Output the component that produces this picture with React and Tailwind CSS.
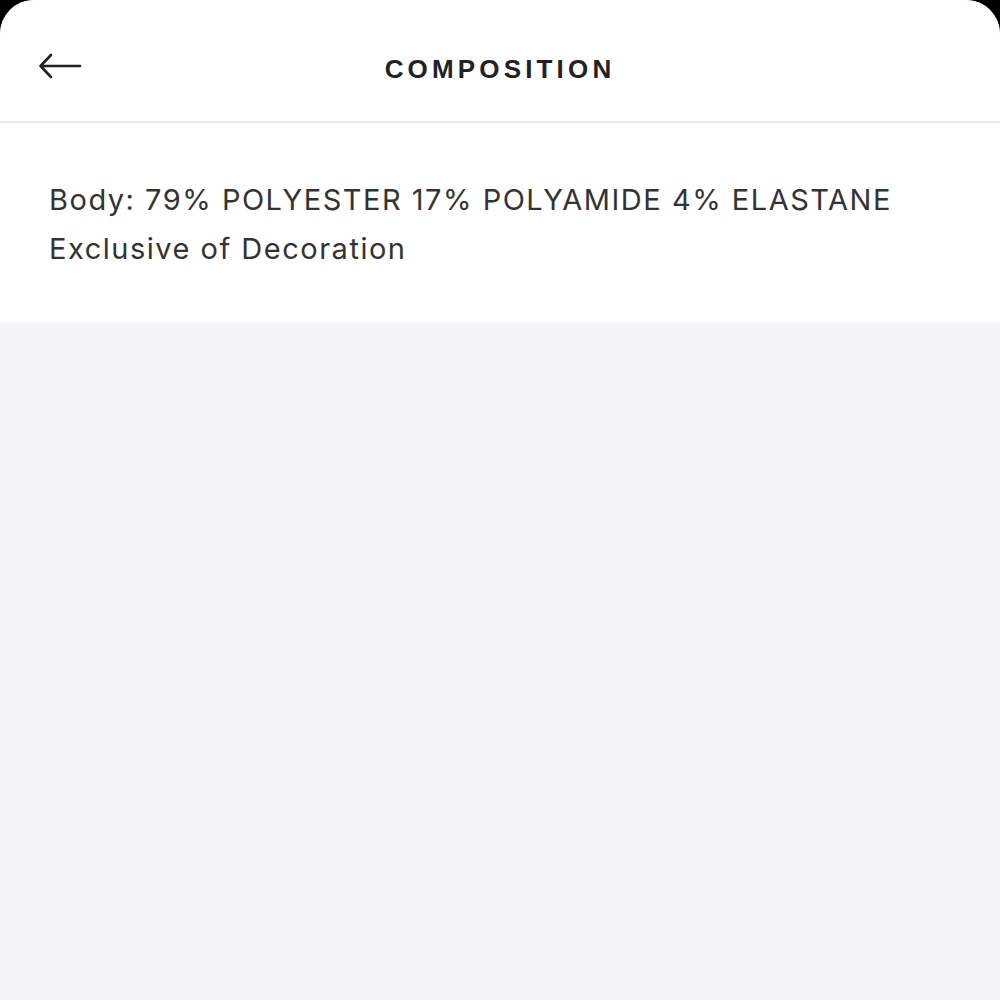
import React from "react";

const ArrowLeft = () => (
  <svg width="44" height="28" viewBox="0 0 44 28" fill="none">
    <path
      d="M42 14H3M13 3L2.5 14L13 25"
      stroke="#222"
      strokeWidth="2.6"
      strokeLinecap="round"
      strokeLinejoin="round"
    />
  </svg>
);

export default function App() {
  return (
    <div className="w-[1000px] h-[1000px] bg-black overflow-hidden">
      <div className="h-full rounded-t-[34px] bg-[#f5f5f7] flex flex-col overflow-hidden font-['Liberation_Sans',sans-serif]">
        <div className="bg-white">
          <div className="relative h-[123px] flex items-center justify-center border-b-2 border-[#e8e8ea]">
            <button className="absolute left-[38px] top-[52px]">
              <ArrowLeft />
            </button>
            <h1 className="text-[26px] font-bold tracking-[0.16em] text-[#222] pt-[18px]">
              COMPOSITION
            </h1>
          </div>
          <div className="px-[49px] pt-[52px] pb-[49px] text-[29px] leading-[49px] tracking-[0.052em] text-[#333] font-['Inter',sans-serif]">
            <p>Body: 79% POLYESTER 17% POLYAMIDE 4% ELASTANE</p>
            <p>Exclusive of Decoration</p>
          </div>
        </div>
      </div>
    </div>
  );
}
